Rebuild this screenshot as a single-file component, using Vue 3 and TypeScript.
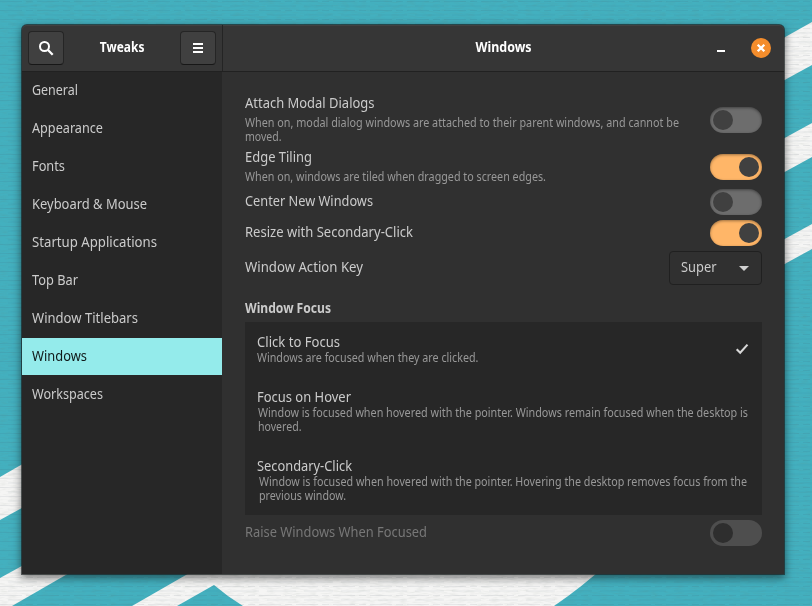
<script setup lang="ts">
interface Line { text: string; width: number }
interface Item { title: Line; lines: Line[]; kind?: 'on' | 'off'; indent?: number; cls: string }

const l = (text: string, width: number): Line => ({ text, width })

const sections: Line[] = [
  l('General', 46), l('Appearance', 71), l('Fonts', 33), l('Keyboard & Mouse', 115),
  l('Startup Applications', 125), l('Top Bar', 46), l('Window Titlebars', 106),
  l('Windows', 55), l('Workspaces', 71),
]

const settings: Item[] = [
  {
    title: l('Attach Modal Dialogs', 129.5), kind: 'off', cls: 'tall',
    lines: [
      l('When on, modal dialog windows are attached to their parent windows, and cannot be', 434),
      l('moved.', 36.5),
    ],
  },
  {
    title: l('Edge Tiling', 67), kind: 'on', cls: 'medium',
    lines: [l('When on, windows are tiled when dragged to screen edges.', 301)],
  },
  { title: l('Center New Windows', 128), kind: 'off', cls: 'short', lines: [] },
  { title: l('Resize with Secondary-Click', 168), kind: 'on', cls: 'short spaced', lines: [] },
]

const modes: Item[] = [
  { title: l('Click to Focus', 83), cls: 'mode-1', indent: 0, lines: [l('Windows are focused when they are clicked.', 221.5)] },
  {
    title: l('Focus on Hover', 94), cls: 'mode-2', indent: 1,
    lines: [
      l('Window is focused when hovered with the pointer. Windows remain focused when the desktop is', 490),
      l('hovered.', 43.5),
    ],
  },
  {
    title: l('Secondary-Click', 95), cls: 'mode-2', indent: 2,
    lines: [
      l('Window is focused when hovered with the pointer. Hovering the desktop removes focus from the', 488),
      l('previous window.', 87),
    ],
  },
]

// Condenses a label horizontally to the given width.
const vFit = {
  mounted(el: HTMLElement, binding: { value: number }) {
    el.style.transform = `scaleX(${binding.value / el.getBoundingClientRect().width})`
  },
}
</script>

<template>
  <div class="desktop">
    <svg class="wallpaper" width="812" height="606" viewBox="0 0 812 606" aria-hidden="true">
      <defs>
        <filter id="weave" x="0" y="0" width="100%" height="100%">
          <feTurbulence type="fractalNoise" baseFrequency="0.12 0.6" numOctaves="2" seed="4" />
          <feColorMatrix values="0 0 0 0 0.15  0 0 0 0 0.2  0 0 0 0 0.15  1.2 0 0 0 -0.5" />
        </filter>
        <pattern id="threads" width="37" height="9" patternUnits="userSpaceOnUse">
          <path d="M0 1.5H22M26 1.5H33M8 6H37" stroke="#345" stroke-opacity=".08" />
        </pattern>
      </defs>
      <rect width="812" height="606" fill="#43b0bf" />
      <g fill="#f5f5f4">
        <path d="M0 477L40 454V498L0 520Z" />
        <path d="M0 578L40 556L90 561L12 606H0Z" />
        <path d="M132 606L205 564H607Q582 587 554 606H243Q228 597 214 585L177 606Z" />
        <path d="M770 45.500L812 22V65L770 88Z" />
        <path d="M770 146L812 123V157L770 180Z" />
        <path d="M770 247L812 224V249L770 272Z" />
      </g>
      <rect width="812" height="606" filter="url(#weave)" opacity=".18" />
      <rect width="812" height="606" fill="url(#threads)" />
    </svg>

    <div class="window">
      <header class="titlebar">
        <div class="title-left">
          <button class="tool" aria-label="Search">
            <svg width="16" height="16" viewBox="0 0 16 16" fill="none" stroke="#fff">
              <circle cx="6.500" cy="6.500" r="4.500" stroke-width="2" />
              <path d="M10 10L14.700 14.700" stroke-width="2.300" />
            </svg>
          </button>
          <h1><span v-fit="44.5" class="fit centered">Tweaks</span></h1>
          <button class="tool" aria-label="Menu">
            <svg width="16" height="16" viewBox="0 0 16 16" fill="#fff">
              <path d="M3 3h10v2H3zM3 7h10v2H3zM3 11h10v2H3z" />
            </svg>
          </button>
        </div>
        <div class="title-right">
          <h1><span v-fit="56" class="fit centered">Windows</span></h1>
          <button class="minimize" aria-label="Minimize">
            <svg width="16" height="16" viewBox="0 0 16 16"><path d="M4 10h8v2H4z" fill="#fff" /></svg>
          </button>
          <button class="close" aria-label="Close">
            <svg width="20" height="20" viewBox="0 0 20 20">
              <path d="M6.700 6.700L13.300 13.300M13.300 6.700L6.700 13.300" stroke="#fff" stroke-width="2.300" />
            </svg>
          </button>
        </div>
      </header>

      <div class="body">
        <nav class="sidebar">
          <a v-for="s in sections" :key="s.text" class="section" :class="{ selected: s.text === 'Windows' }">
            <span v-fit="s.width" class="fit">{{ s.text }}</span>
          </a>
        </nav>

        <main class="content">
          <div v-for="s in settings" :key="s.title.text" class="row" :class="s.cls">
            <div class="labels">
              <div class="name"><span v-fit="s.title.width" class="fit">{{ s.title.text }}</span></div>
              <div v-if="s.lines.length" class="description">
                <div v-for="d in s.lines" :key="d.text"><span v-fit="d.width" class="fit">{{ d.text }}</span></div>
              </div>
            </div>
            <span class="switch" :class="s.kind"><i /></span>
          </div>

          <div class="row action">
            <div class="name"><span v-fit="118" class="fit">Window Action Key</span></div>
            <button class="select">
              <span v-fit="35.5" class="fit">Super</span>
              <svg width="10" height="5" viewBox="0 0 10 5"><path d="M0 0H10L5 5Z" fill="#d0d0d0" /></svg>
            </button>
          </div>

          <h2><span v-fit="86" class="fit">Window Focus</span></h2>
          <div class="modes">
            <div v-for="m in modes" :key="m.title.text" class="mode" :class="m.cls">
              <div class="labels">
                <div class="name"><span v-fit="m.title.width" class="fit">{{ m.title.text }}</span></div>
                <div class="description" :class="'indent-' + m.indent">
                  <div v-for="d in m.lines" :key="d.text"><span v-fit="d.width" class="fit">{{ d.text }}</span></div>
                </div>
              </div>
              <svg v-if="m.cls === 'mode-1'" class="check" width="16" height="16" viewBox="0 0 16 16">
                <path d="M2.700 8.200L6.200 11.700L13.500 3.600" fill="none" stroke="#d8d8d8" stroke-width="2.100" />
              </svg>
            </div>
          </div>

          <div class="row short disabled">
            <div class="name"><span v-fit="182" class="fit">Raise Windows When Focused</span></div>
            <span class="switch off"><i /></span>
          </div>
        </main>
      </div>
    </div>
  </div>
</template>

<style>
body { overflow: hidden; }
</style>

<style scoped>
* { box-sizing: border-box; }
.desktop {
  position: relative;
  width: 812px;
  height: 606px;
  padding: 25px 28px 32px 22px;
  overflow: hidden;
  font: 14px/16px "Noto Sans", sans-serif;
  color: #cbcbcb;
}
.wallpaper { position: absolute; inset: 0; }
.window {
  position: relative;
  display: flex;
  flex-direction: column;
  width: 762px;
  height: 549px;
  border-radius: 5px 5px 0 0;
  background: #303030;
  box-shadow: 0 0 0 1px rgba(25, 30, 30, .65), 0 3px 9px 1px rgba(0, 0, 0, .5);
}
.fit { display: inline-block; white-space: nowrap; transform-origin: 0 50%; }
.centered { transform-origin: 50% 50%; }
button { margin: 0; padding: 0; border: 0; background: none; font: inherit; color: inherit; }
svg { display: block; flex: none; }
h1, h2 { margin: 0; font-size: 14px; line-height: 16px; font-weight: 700; }
h1 { color: #fff; }

.titlebar {
  display: flex;
  flex: none;
  height: 47px;
  border-bottom: 1px solid #212121;
  border-radius: 5px 5px 0 0;
  background: #363636;
  box-shadow: inset 0 1px #414141;
}
.title-left {
  display: flex;
  align-items: center;
  justify-content: space-between;
  width: 201px;
  padding: 0 6px;
  border-right: 1px solid #242424;
}
.title-left h1 { flex: 1; text-align: center; padding-bottom: 2px; }
.tool {
  display: grid;
  place-items: center;
  width: 36px;
  height: 34px;
  border: 1px solid #252525;
  border-bottom-color: #171717;
  border-radius: 4px;
  background: #404040;
}
.title-right { display: flex; flex: 1; align-items: center; padding-right: 13px; }
.title-right h1 { flex: 1; padding: 0 0 2px 72px; text-align: center; }
.minimize { margin-right: 22px; }
.close { width: 20px; height: 20px; border-radius: 50%; background: #f48d2c; }

.body { display: flex; flex: 1; min-height: 0; }
.sidebar { flex: none; width: 200px; background: #272727; }
.section {
  display: flex;
  align-items: center;
  height: 37px;
  margin-bottom: 1px;
  padding: 0 10px 1px;
}
.section.selected { background: #94ebeb; color: #101818; }

.content { flex: none; width: 562px; padding: 23px 22px 0 23px; }
.row { display: flex; align-items: center; justify-content: space-between; }
.tall { height: 50px; }
.labels { flex: 1; min-width: 0; }
.tall .labels, .medium .labels { align-self: flex-start; }
.medium { height: 36px; margin-top: 4px; }
.short { height: 26px; margin-top: 4px; }
.spaced { margin-top: 5px; }
.name { height: 16px; }
.short .name { height: 18px; }
.description { margin-top: 5px; font-size: 12px; line-height: 14px; color: #989898; }
.description > div { height: 14px; }

.switch {
  flex: none;
  width: 52px;
  height: 26px;
  padding: 3px;
  border-radius: 13px;
  background: #6d6d6d;
  box-shadow: inset 0 1px 3px rgba(0, 0, 0, .4);
}
.switch i { display: block; width: 20px; height: 20px; border-radius: 50%; background: #404040; }
.switch.on { background: #ffb668; }
.switch.on i { margin-left: auto; }

.action { height: 34px; margin-top: 5px; }
.action .name { height: 18px; }
.select {
  display: flex;
  align-items: center;
  justify-content: space-between;
  width: 93px;
  height: 34px;
  padding: 0 12px 0 11px;
  border: 1px solid #202020;
  border-radius: 4px;
  background: #303030;
}
.select .fit { margin-bottom: 2px; }
h2 { margin: 15px 0 6px; height: 16px; }
.modes { height: 193px; background: #272727; }
.mode { display: flex; justify-content: space-between; height: 69px; padding: 12px 12px 0; }
.mode-1 { height: 55px; }
.mode .description { margin-top: 1px; }
.indent-1 { padding-left: 1px; }
.indent-2 { padding-left: 2px; }
.check { margin-top: 7px; }
.disabled { margin-top: 5px; color: #777; }
.disabled .switch { background: #4e4e4e; box-shadow: none; }
.disabled .switch i { background: #2e2e2e; }
</style>
